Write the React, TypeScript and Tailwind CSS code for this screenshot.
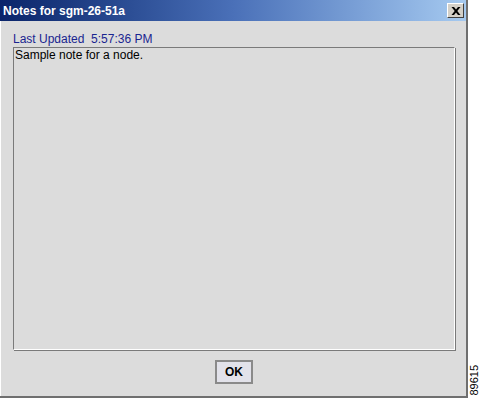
import React from 'react';

const App: React.FC = () => {
  return (
    <div className="w-[482px] h-[399px] bg-white flex" style={{ fontFamily: '"Liberation Sans", Arial, sans-serif' }}>
      <div className="w-[468px] h-[398px] flex flex-col bg-[#dcdcdc] border-r-2 border-b-2 border-[#6f6f6f]">
        <div className="h-[21px] flex items-center justify-between pl-[3px] pr-[2px] bg-gradient-to-r from-[#0a246a] via-[#4a70b8] to-[#a6caf0]">
          <span className="text-white font-bold text-[12px]">Notes for sgm-26-51a</span>
          <button className="w-[17px] h-[15px] flex items-center justify-center bg-[#d4d0c8] border border-t-white border-l-white border-r-[#404040] border-b-[#404040]">
            <svg width="10" height="8" viewBox="0 0 10 8">
              <path d="M0.5 0h2.5l2 2.6L7 0h2.5L6.3 4l3.2 4H7L5 5.4 3 8H0.5l3.2-4z" fill="#000" />
            </svg>
          </button>
        </div>
        <div className="flex-1 flex flex-col pl-[12px] pr-[11px] pt-[11px] border-l border-white">
          <div className="text-[12px] leading-[15px] text-[#1a2590]">Last Updated&nbsp;&nbsp;5:57:36 PM</div>
          <div className="h-[303px] border border-[#7a7a7a] border-r-[#ffffff] border-b-[#ffffff] shadow-[1px_1px_0_#7a7a7a] px-[1px] text-[12px] leading-[15px] text-black">
            Sample note for a node.
          </div>
          <div className="flex justify-center pt-[10px]">
            <button className="w-[38px] h-[24px] border-2 border-[#8a8a8a] bg-[#e2e2ea] text-[12px] font-bold text-black flex items-center justify-center">
              OK
            </button>
          </div>
        </div>
      </div>
      <div className="flex-1 flex items-end pb-[3px]">
        <span className="text-[11px] text-black [writing-mode:vertical-rl] rotate-180 leading-[12px]">89615</span>
      </div>
    </div>
  );
};

export default App;
